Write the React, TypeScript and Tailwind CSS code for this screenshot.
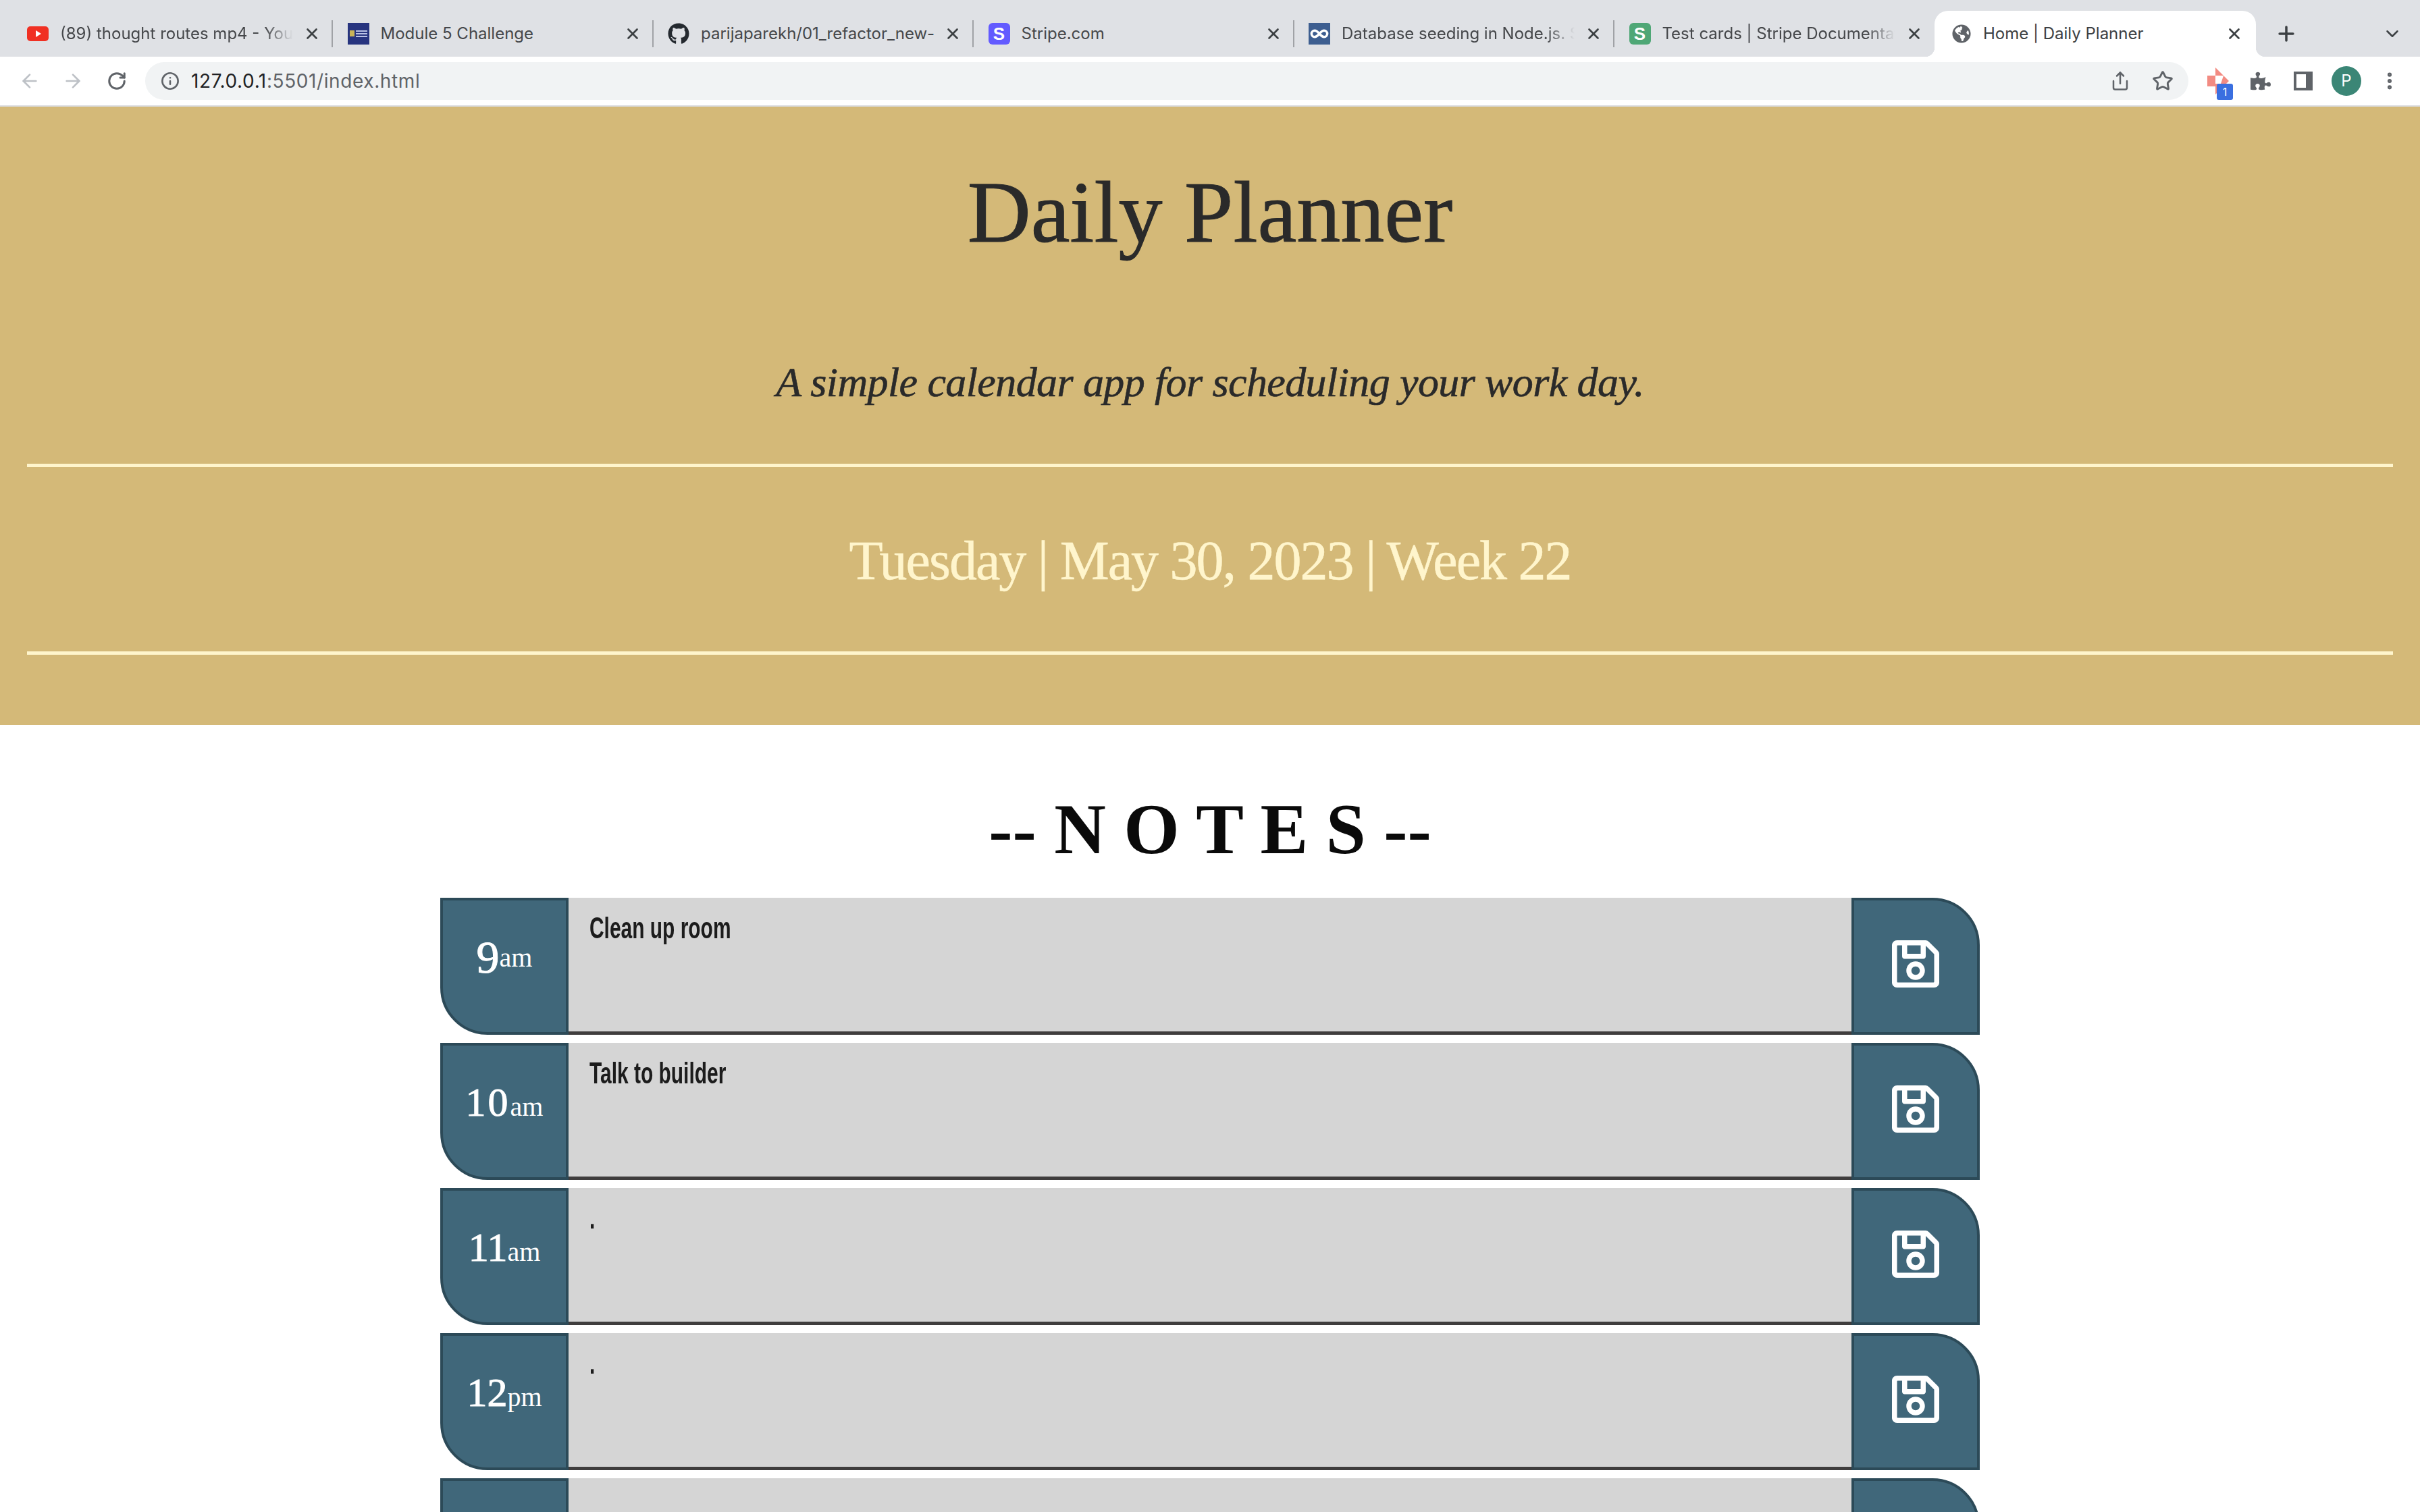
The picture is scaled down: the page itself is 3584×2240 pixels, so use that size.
import { ArrowLeft, ArrowRight, ChevronDown, EllipsisVertical, Infinity as InfinityIcon, Info, Plus, RotateCw, Share, Star, X } from "lucide-react";
import type { ReactNode } from "react";
import { FaGithub, FaGlobeAmericas, FaPuzzlePiece, FaRegSave } from "react-icons/fa";

const SERIF = "font-['Liberation_Serif',serif]";

function YoutubeIcon() {
  return (
    <svg width="32" height="32" viewBox="0 0 32 32">
      <rect x="0" y="5" width="32" height="22" rx="5" fill="#f03023" />
      <path d="M13 11 L21 16 L13 21 Z" fill="#fff" />
    </svg>
  );
}

function UwaIcon() {
  return (
    <svg width="32" height="32" viewBox="0 0 32 32">
      <rect width="32" height="32" fill="#27347f" />
      <rect x="3" y="11" width="7" height="9" fill="#c9b458" />
      <rect x="12" y="11" width="17" height="2" fill="#b9c1e4" />
      <rect x="12" y="15" width="17" height="2" fill="#b9c1e4" />
      <rect x="12" y="19" width="17" height="2" fill="#b9c1e4" />
    </svg>
  );
}

function LetterIcon({ bg }: { bg: string }) {
  return (
    <div className={`flex h-8 w-8 items-center justify-center rounded-md font-['Liberation_Sans',sans-serif] text-[26px] font-bold leading-none text-white ${bg}`}>
      S
    </div>
  );
}

function CoIcon() {
  return (
    <div className="flex h-8 w-8 items-center justify-center bg-[#3d5e90]">
      <InfinityIcon size={28} strokeWidth={3} color="#fff" />
    </div>
  );
}

const TABS: { title: string; icon: ReactNode; fade?: boolean; last?: boolean }[] = [
  { title: "(89) thought routes mp4 - YouTube", icon: <YoutubeIcon />, fade: true },
  { title: "Module 5 Challenge", icon: <UwaIcon /> },
  { title: "parijaparekh/01_refactor_new-", icon: <FaGithub size={32} color="#24292f" /> },
  { title: "Stripe.com", icon: <LetterIcon bg="bg-[#635bff]" /> },
  { title: "Database seeding in Node.js. Seeding", icon: <CoIcon />, fade: true },
  { title: "Test cards | Stripe Documentation", icon: <LetterIcon bg="bg-[#4fa776]" />, fade: true, last: true },
];

function Tab({ title, icon, fade, last }: { title: string; icon: ReactNode; fade?: boolean; last?: boolean }) {
  return (
    <div className="flex h-[68px] w-[474.5px] shrink-0 items-center pl-[21px]">
      <div className="flex w-8 shrink-0 items-center justify-center">{icon}</div>
      <div
        className={`ml-[17px] w-[345px] overflow-hidden whitespace-nowrap text-[24px] text-[#45474a] ${
          fade ? "[mask-image:linear-gradient(to_right,black_88%,transparent)]" : ""
        }`}
      >
        {title}
      </div>
      <X size={26} strokeWidth={2.5} className="ml-[15px] shrink-0 text-[#3c4043]" />
      {!last && <div className="ml-4 h-10 w-0.5 shrink-0 bg-[#a0a2a6]" />}
    </div>
  );
}

function TabStrip() {
  return (
    <div className="flex h-[84px] items-end bg-[#dfe1e5] pl-[19px]">
      {TABS.map((tab) => (
        <Tab key={tab.title} {...tab} />
      ))}
      <div className="relative -ml-px flex h-[68px] w-[476px] shrink-0 items-center rounded-t-[20px] bg-white pl-[26px] pr-[19px]">
        <div className="absolute bottom-0 left-[-14px] h-[14px] w-[14px] bg-[radial-gradient(circle_at_0_0,transparent_14px,white_14.5px)]" />
        <div className="absolute bottom-0 right-[-14px] h-[14px] w-[14px] bg-[radial-gradient(circle_at_100%_0,transparent_14px,white_14.5px)]" />
        <FaGlobeAmericas size={28} color="#5f6368" />
        <div className="ml-[18px] flex-1 whitespace-nowrap text-[24px] text-[#3c4043]">Home | Daily Planner</div>
        <X size={26} strokeWidth={2.5} className="text-[#3c4043]" />
      </div>
      <div className="flex h-[68px] flex-1 items-center">
        <Plus size={34} strokeWidth={2.5} className="ml-7 text-[#3c4043]" />
        <ChevronDown size={30} strokeWidth={2} className="ml-[125px] text-[#3c4043]" />
      </div>
    </div>
  );
}

function ExtensionIcon() {
  return (
    <div className="relative h-10 w-10">
      <svg width="40" height="40" viewBox="0 0 40 40">
        <path d="M12 0 L32 20 L12 40 Z" fill="#f28b82" />
        <path d="M0 12 H12 V28 H0 Z" fill="#f28b82" />
        <path d="M12 12 H24 L20 24 H12 Z" fill="#fff" />
      </svg>
      <div className="absolute -bottom-2 left-[14px] flex h-6 w-6 items-center justify-center rounded-[3px] bg-[#3a6fe0] text-[16px] leading-none text-white">
        1
      </div>
    </div>
  );
}

function Toolbar() {
  return (
    <div className="flex h-[72px] items-center bg-white pl-[28px]">
      <ArrowLeft size={32} strokeWidth={2} className="text-[#bdc1c6]" />
      <ArrowRight size={32} strokeWidth={2} className="ml-8 text-[#bdc1c6]" />
      <RotateCw size={30} strokeWidth={2.4} className="ml-[34px] text-[#5f6368]" />
      <div className="ml-[27px] flex h-14 w-[3026px] items-center rounded-full bg-[#f1f3f4] pl-[23px] pr-[22px]">
        <Info size={28} strokeWidth={2.2} className="text-[#5f6368]" />
        <div className="ml-[17px] flex-1 text-[28px] tracking-[0.6px] text-[#5f6368]">
          <span className="text-[#202124]">127.0.0.1</span>:5501/index.html
        </div>
        <Share size={30} strokeWidth={2} className="text-[#5f6368]" />
        <Star size={32} strokeWidth={2.2} className="ml-8 text-[#5f6368]" />
      </div>
      <div className="ml-7">
        <ExtensionIcon />
      </div>
      <FaPuzzlePiece size={30} color="#5f6368" className="ml-6" />
      <svg width="28" height="28" viewBox="0 0 28 28" className="ml-[34px]">
        <rect x="2" y="2" width="24" height="24" fill="#fff" stroke="#5f6368" strokeWidth="4" />
        <rect x="18" y="2" width="8" height="24" fill="#5f6368" />
      </svg>
      <div className="ml-7 flex h-11 w-11 items-center justify-center rounded-full bg-[#3b8676] text-[24px] text-white">P</div>
      <EllipsisVertical size={32} strokeWidth={2.6} className="ml-[26px] text-[#5f6368]" />
    </div>
  );
}

function Header() {
  return (
    <header className={`h-[916px] bg-[#d4b978] px-10 text-center ${SERIF}`}>
      <h1 className="pt-[81px] text-[130px] leading-[150px] text-[#2a2a2a] [-webkit-text-stroke:1px_#2a2a2a]">Daily Planner</h1>
      <p className="mt-[137px] text-[62px] italic leading-[80px] tracking-[-0.6px] text-[#2a2a2a] [-webkit-text-stroke:0.6px_#2a2a2a]">
        A simple calendar app for scheduling your work day.
      </p>
      <div className="mt-[81px] flex h-[283px] items-center justify-center border-y-[5px] border-[#fff5cc] pt-1 text-[82px] leading-none tracking-[-2px] text-[#fff5cc] [-webkit-text-stroke:0.5px_#fff5cc]">
        Tuesday | May 30, 2023 | Week 22
      </div>
    </header>
  );
}

const HOURS = [
  { hour: "9", suffix: "am", note: "Clean up room", digit: "text-[68px] [vertical-align:-9px]" },
  { hour: "10", suffix: "am", note: "Talk to builder", digit: "text-[60px] tracking-[3px]" },
  { hour: "11", suffix: "am", note: ".", digit: "text-[60px]" },
  { hour: "12", suffix: "pm", note: ".", digit: "text-[60px]" },
  { hour: "1", suffix: "pm", note: "", digit: "text-[60px]" },
];

function HourRow({ hour, suffix, note, digit }: (typeof HOURS)[number]) {
  return (
    <div className="grid h-[203px] shrink-0 grid-cols-[190px_1fr_190px]">
      <div className={`flex items-center justify-center rounded-bl-[70px] border-4 border-[#2c4a58] bg-[#40677a] pb-[28px] text-white ${SERIF}`}>
        <div className="leading-none">
          <span className={`[-webkit-text-stroke:1px_white] ${digit}`}>{hour}</span>
          <span className="text-[40px]">{suffix}</span>
        </div>
      </div>
      <div className="border-b-[5px] border-[#3f3d3d] bg-[#d5d5d5] pl-[31px] pt-[19px] font-['Liberation_Sans',sans-serif] text-[45px] font-bold leading-[52px] text-[#1c1c1c]">
        <div className="origin-left scale-x-[0.665] whitespace-nowrap">{note}</div>
      </div>
      <button className="flex items-center justify-center rounded-tr-[70px] border-4 border-[#2c4a58] bg-[#40677a] pb-[7px] text-white">
        <FaRegSave size={80} />
      </button>
    </div>
  );
}

export default function App() {
  return (
    <div className="h-[2240px] overflow-hidden bg-white font-['Inter',sans-serif]">
      <TabStrip />
      <Toolbar />
      <div className="h-0.5 bg-[#dadce0]" />
      <Header />
      <main className="mx-auto w-[2280px]">
        <h2 className={`pb-[41px] pt-[95px] text-center text-[106px] font-bold leading-[120px] text-[#0a0a0a] ${SERIF}`}>
          -- N O T E S --
        </h2>
        <div className="flex flex-col gap-3">
          {HOURS.map((row) => (
            <HourRow key={row.hour} {...row} />
          ))}
        </div>
      </main>
    </div>
  );
}
